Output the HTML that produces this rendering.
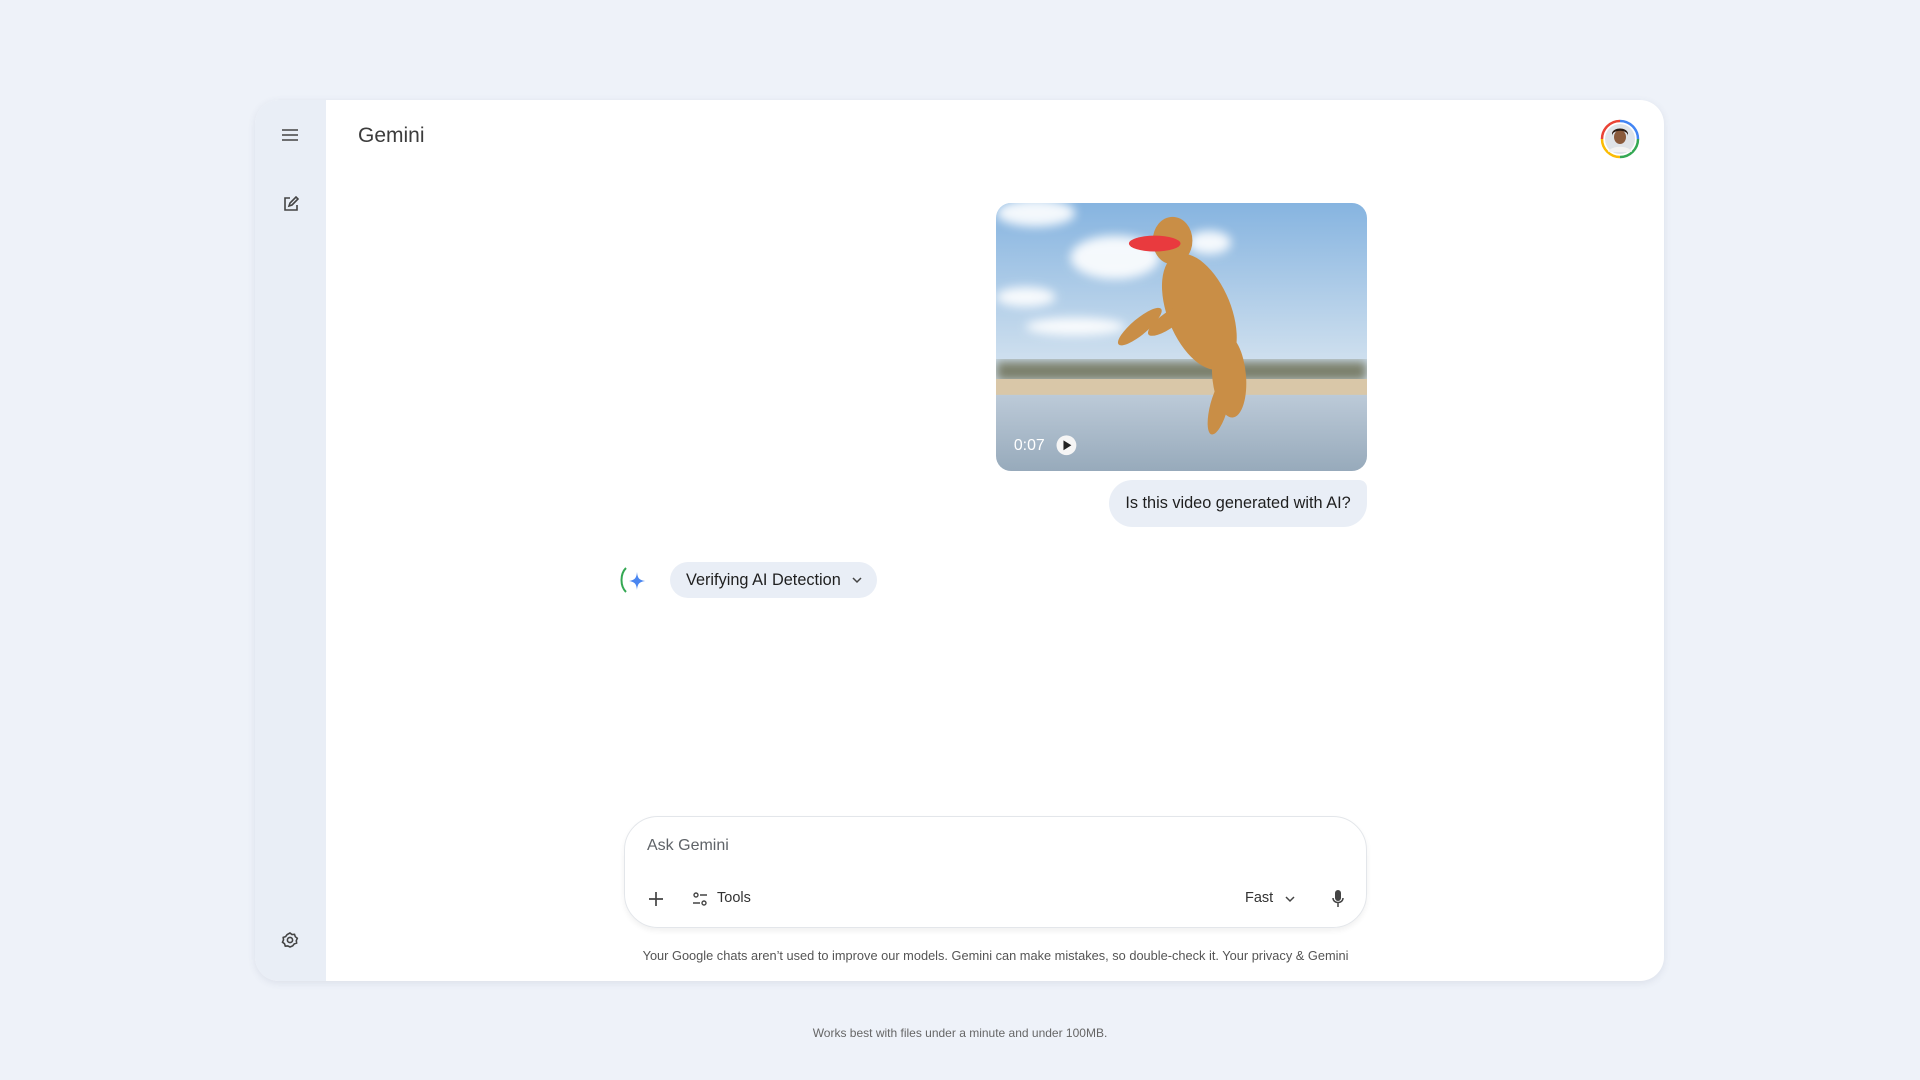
<!DOCTYPE html>
<html><head><meta charset="utf-8"><style>
*{box-sizing:border-box;margin:0;padding:0}
body{width:1920px;height:1080px;background:#eef2f9;font-family:"Liberation Sans",sans-serif;position:relative;overflow:hidden;color:#1f1f1f}
.card{position:absolute;left:255px;top:100px;width:1409px;height:881px;background:#fff;border-radius:24px;overflow:hidden;box-shadow:0 2px 8px rgba(60,70,100,.10)}
.side{position:absolute;left:0;top:0;width:71px;height:100%;background:#e9eef6}
.abs{position:absolute}
.title{left:103px;top:24px;font-size:21px;color:#3c3c3c}
.vid{left:741px;top:103px;width:371px;height:268px;border-radius:15px;overflow:hidden}
.bubble{left:854px;top:380px;width:258px;height:47px;background:#e9eef6;border-radius:24px 8px 24px 24px;font-size:16.3px;line-height:47px;text-align:center;color:#1f1f1f}
.chip{left:415px;top:462px;width:207px;height:36px;background:#e9eef6;border-radius:18px;font-size:16.3px;line-height:36px;padding-left:16px}
.input{left:369px;top:716px;width:743px;height:112px;border:1px solid #e3e6ea;border-radius:34px;box-shadow:0 3px 6px rgba(0,0,0,.06)}
.disc{top:848px;text-align:center;font-size:12.8px;color:#555}
.foot{position:absolute;top:1026px;width:100%;text-align:center;font-size:12px;color:#666}
</style></head><body>
<div class="card">
 <div class="side">
  <svg class="abs" style="left:26px;top:26px" width="18" height="18" viewBox="0 0 18 18"><path d="M1 4h16M1 9h16M1 14h16" stroke="#444" stroke-width="1.6"/></svg>
  <svg class="abs" style="left:28px;top:96px" width="16" height="16" viewBox="0 0 16 16" fill="none" stroke="#444" stroke-width="1.6"><path d="M7 2H2v12h12V9"/><path d="M6 10l1-3 6-6 2 2-6 6z"/></svg>
  <svg class="abs" style="left:26px;top:831px" width="18" height="18" viewBox="0 0 18 18" fill="none" stroke="#444" stroke-width="1.6"><path d="M9 2l2 1.5 2.5-.2.8 2.4 2 1.6-1 2.3.3 2.5-2.4.8-1.5 2L9 16l-2.2-1.1-2.5.2-.8-2.4-2-1.5 1-2.3-.3-2.5 2.4-.8 1.5-2z"/><circle cx="9" cy="9" r="2.6"/></svg>
 </div>
 <div class="abs title">Gemini</div>
 <svg class="abs" style="left:1345px;top:19px" width="40" height="40" viewBox="0 0 40 40">
  <path d="M20 2A18 18 0 0 1 38 20" stroke="#4285f4" stroke-width="2.5" fill="none"/>
  <path d="M38 20A18 18 0 0 1 20 38" stroke="#34a853" stroke-width="2.5" fill="none"/>
  <path d="M20 38A18 18 0 0 1 2 20" stroke="#fbbc04" stroke-width="2.5" fill="none"/>
  <path d="M2 20A18 18 0 0 1 20 2" stroke="#ea4335" stroke-width="2.5" fill="none"/>
  <circle cx="20" cy="20" r="15" fill="#dfe3e8"/>
  <ellipse cx="20" cy="18" rx="6" ry="7" fill="#8a5a3c"/>
  <path d="M12 17c0-7 16-7 16 0v-3c-2-6-14-6-16 0z" fill="#2a1a12"/>
  <path d="M8 33c3-7 21-7 24 0" fill="#f3f3f3"/>
 </svg>
 <div class="abs vid">
  <svg width="371" height="268" viewBox="0 0 374 271" preserveAspectRatio="none">
   <defs><linearGradient id="sky" x1="0" y1="0" x2="0" y2="1"><stop offset="0" stop-color="#86b4e0"/><stop offset="1" stop-color="#d8e5f0"/></linearGradient>
   <linearGradient id="wat" x1="0" y1="0" x2="0" y2="1"><stop offset="0" stop-color="#bccad8"/><stop offset="1" stop-color="#97aabb"/></linearGradient>
   <filter id="bl"><feGaussianBlur stdDeviation="5"/></filter></defs>
   <rect width="374" height="180" fill="url(#sky)"/>
   <g fill="#fff" filter="url(#bl)" opacity=".9"><ellipse cx="120" cy="55" rx="45" ry="22"/><ellipse cx="215" cy="40" rx="22" ry="12"/><ellipse cx="40" cy="10" rx="40" ry="14"/><ellipse cx="80" cy="125" rx="50" ry="9"/><ellipse cx="30" cy="95" rx="30" ry="10"/></g>
   <rect y="160" width="374" height="20" fill="#7a7f6a" filter="url(#bl)"/>
   <rect y="178" width="374" height="17" fill="#d9c7a8"/>
   <rect y="194" width="374" height="77" fill="url(#wat)"/>
   <g fill="#c98e46">
    <ellipse cx="205" cy="110" rx="32" ry="62" transform="rotate(-22 205 110)"/>
    <ellipse cx="178" cy="38" rx="20" ry="24"/>
    <ellipse cx="235" cy="175" rx="17" ry="42" transform="rotate(-5 235 175)"/>
    <ellipse cx="225" cy="205" rx="9" ry="30" transform="rotate(15 225 205)"/>
    <ellipse cx="145" cy="125" rx="28" ry="8" transform="rotate(-40 145 125)"/>
    <ellipse cx="175" cy="118" rx="26" ry="8" transform="rotate(-35 175 118)"/>
   </g>
   <ellipse cx="160" cy="41" rx="26" ry="8" fill="#e93a3e"/>
   <text x="18" y="250" font-family="Liberation Sans" font-size="16" fill="#fff">0:07</text>
   <circle cx="71" cy="245" r="10" fill="#f5f5f5"/><path d="M68 240v10l8-5z" fill="#222"/>
  </svg>
 </div>
 <div class="abs bubble">Is this video generated with AI?</div>
 <svg class="abs" style="left:363px;top:466px" width="32" height="30" viewBox="0 0 32 30">
  <path d="M8 2C2 8 2 20 8 26" stroke="#34a853" stroke-width="2" fill="none"/>
  <path d="M19 6C19.6 12 21 14 27 15 21 16 19.6 18 19 24 18.4 18 17 16 11 15 17 14 18.4 12 19 6z" fill="#4a86f0"/>
 </svg>
 <div class="abs chip">Verifying AI Detection <svg style="margin-left:6px;vertical-align:0" width="12" height="10" viewBox="0 0 12 10"><path d="M2 3l4 4 4-4" stroke="#444" stroke-width="1.5" fill="none"/></svg></div>
 <div class="abs input">
  <div class="abs" style="left:22px;top:20px;font-size:16px;color:#5f6368">Ask Gemini</div>
  <svg class="abs" style="left:23px;top:74px" width="16" height="16" viewBox="0 0 16 16"><path d="M8 1v14M1 8h14" stroke="#444" stroke-width="1.7"/></svg>
  <svg class="abs" style="left:67px;top:74px" width="16" height="16" viewBox="0 0 16 16" fill="none" stroke="#444" stroke-width="1.4"><circle cx="4" cy="4" r="2"/><path d="M8 4h7M1 12h7"/><circle cx="12" cy="12" r="2"/></svg>
  <div class="abs" style="left:92px;top:73px;font-size:14.5px;color:#333">Tools</div>
  <div class="abs" style="left:620px;top:73px;font-size:14.5px;color:#333">Fast</div>
  <svg class="abs" style="left:659px;top:77px" width="12" height="10" viewBox="0 0 12 10"><path d="M2 3l4 4 4-4" stroke="#444" stroke-width="1.5" fill="none"/></svg>
  <svg class="abs" style="left:706px;top:72px" width="14" height="20" viewBox="0 0 14 20"><rect x="4" y="1" width="6" height="11" rx="3" fill="#444"/><path d="M2 9c0 6 10 6 10 0M7 14v4" stroke="#444" stroke-width="1.5" fill="none"/></svg>
 </div>
 <div class="abs disc" style="left:340px;width:801px">Your Google chats aren’t used to improve our models. Gemini can make mistakes, so double-check it. Your privacy &amp; Gemini</div>
</div>
<div class="foot">Works best with files under a minute and under 100MB.</div>
</body></html>
